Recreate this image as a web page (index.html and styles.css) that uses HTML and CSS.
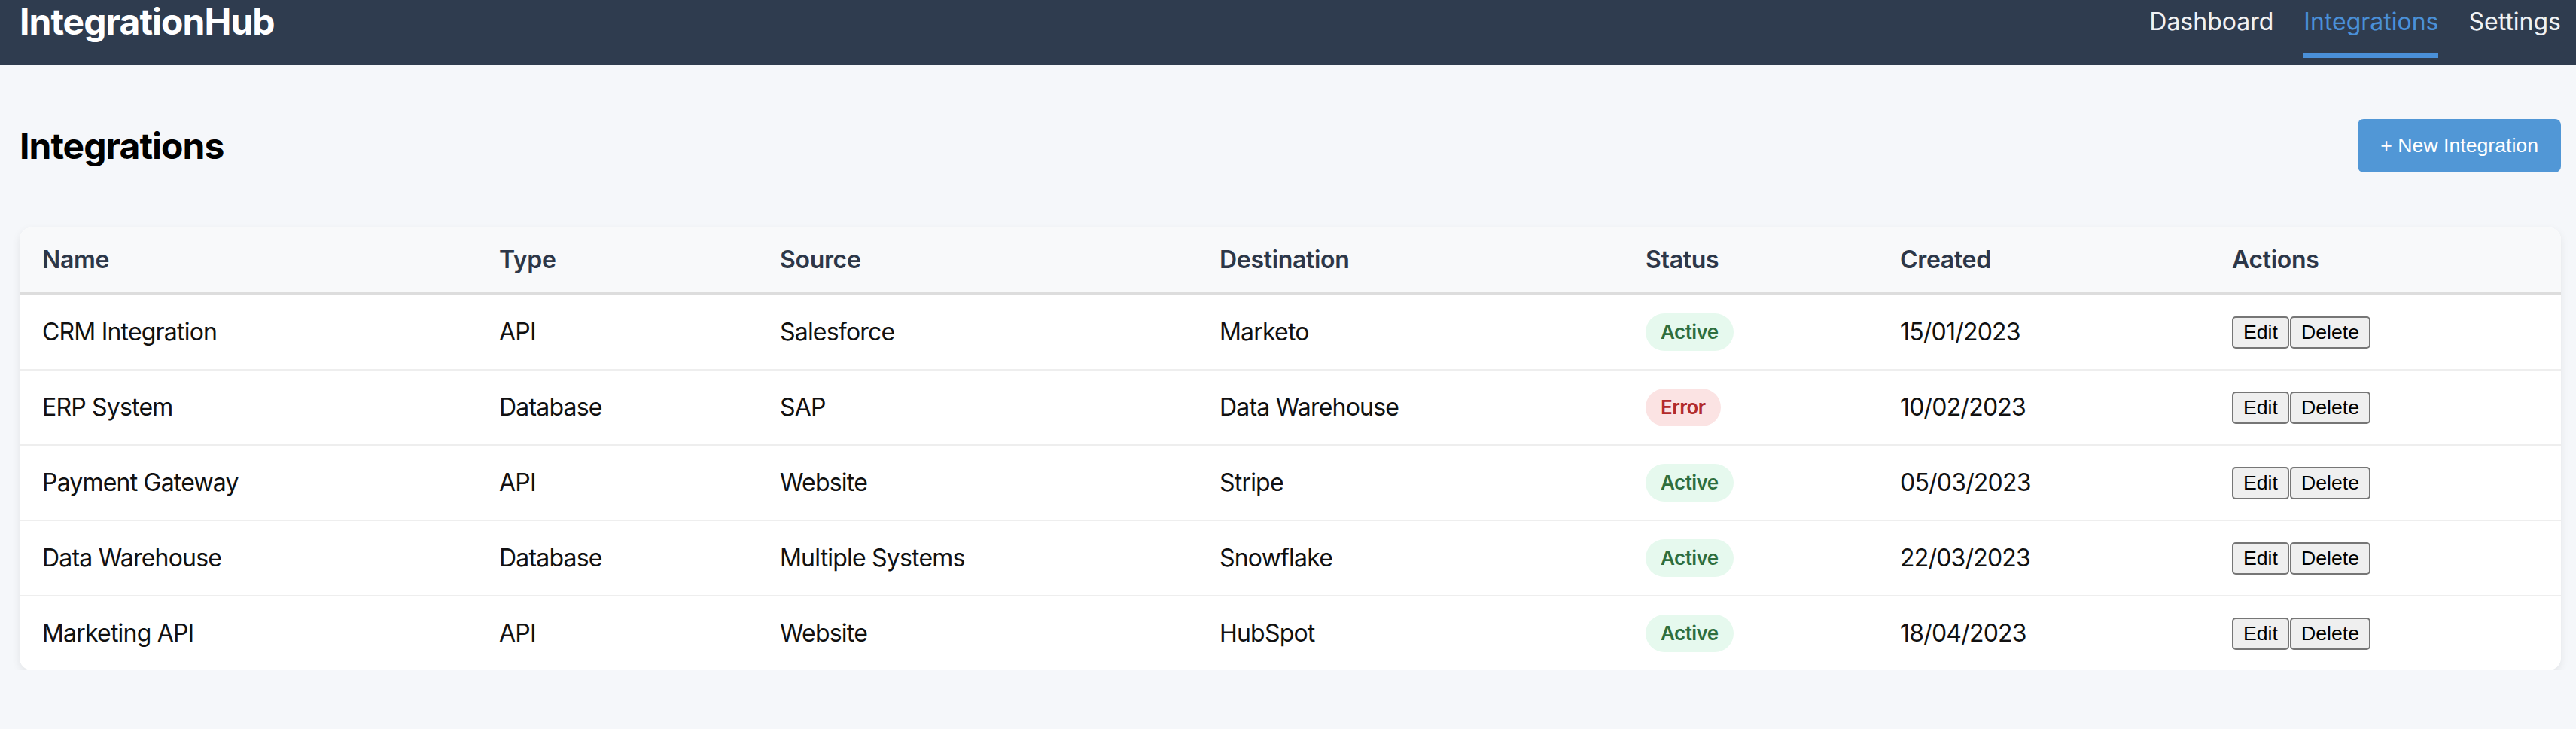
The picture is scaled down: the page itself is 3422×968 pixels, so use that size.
FILE: index.html
```html
<!DOCTYPE html>
<html lang="en">
<head>
<meta charset="utf-8">
<title>IntegrationHub</title>
<link rel="stylesheet" href="styles.css">
</head>
<body>
<nav class="navbar">
  <div class="brand">IntegrationHub</div>
  <ul class="nav-links">
    <li><a class="nav-link" href="#">Dashboard</a></li>
    <li><a class="nav-link active" href="#">Integrations</a></li>
    <li><a class="nav-link" href="#">Settings</a></li>
  </ul>
</nav>
<main class="content">
  <div class="page-header">
    <h1 class="page-title">Integrations</h1>
    <button class="btn-primary">+ New Integration</button>
  </div>
  <div class="card">
    <table class="data-table">
      <colgroup>
        <col class="col-name">
        <col class="col-type">
        <col class="col-source">
        <col class="col-dest">
        <col class="col-status">
        <col class="col-created">
        <col class="col-actions">
      </colgroup>
      <thead>
        <tr>
          <th>Name</th><th>Type</th><th>Source</th><th>Destination</th><th>Status</th><th>Created</th><th>Actions</th>
        </tr>
      </thead>
      <tbody>
        <tr>
          <td>CRM Integration</td><td>API</td><td>Salesforce</td><td>Marketo</td>
          <td><span class="badge badge-active">Active</span></td><td>15/01/2023</td>
          <td><span class="actions"><button class="btn-sm">Edit</button><button class="btn-sm">Delete</button></span></td>
        </tr>
        <tr>
          <td>ERP System</td><td>Database</td><td>SAP</td><td>Data Warehouse</td>
          <td><span class="badge badge-error">Error</span></td><td>10/02/2023</td>
          <td><span class="actions"><button class="btn-sm">Edit</button><button class="btn-sm">Delete</button></span></td>
        </tr>
        <tr>
          <td>Payment Gateway</td><td>API</td><td>Website</td><td>Stripe</td>
          <td><span class="badge badge-active">Active</span></td><td>05/03/2023</td>
          <td><span class="actions"><button class="btn-sm">Edit</button><button class="btn-sm">Delete</button></span></td>
        </tr>
        <tr>
          <td>Data Warehouse</td><td>Database</td><td>Multiple Systems</td><td>Snowflake</td>
          <td><span class="badge badge-active">Active</span></td><td>22/03/2023</td>
          <td><span class="actions"><button class="btn-sm">Edit</button><button class="btn-sm">Delete</button></span></td>
        </tr>
        <tr>
          <td>Marketing API</td><td>API</td><td>Website</td><td>HubSpot</td>
          <td><span class="badge badge-active">Active</span></td><td>18/04/2023</td>
          <td><span class="actions"><button class="btn-sm">Edit</button><button class="btn-sm">Delete</button></span></td>
        </tr>
      </tbody>
    </table>
  </div>
</main>
</body>
</html>
```
FILE: styles.css
```css
html, body {
  margin: 0;
  padding: 0;
}

body {
  background: #f5f7fa;
  font-family: Inter, "Noto Sans", sans-serif;
  letter-spacing: -0.02em;
  color: #111;
}

.navbar {
  display: flex;
  justify-content: space-between;
  align-items: flex-start;
  height: 86px;
  box-sizing: border-box;
  padding: 0 20px 0 26px;
  background: #2f3c4f;
}

.brand {
  font-size: 48px;
  font-weight: 700;
  line-height: 58px;
  letter-spacing: -0.02em;
  color: #ffffff;
}

.nav-links {
  display: flex;
  gap: 40px;
  list-style: none;
  margin: 0;
  padding: 0;
}

.nav-link {
  display: block;
  font-size: 32px;
  line-height: 39px;
  letter-spacing: 0;
  padding-top: 9px;
  padding-bottom: 23px;
  border-bottom: 6px solid transparent;
  color: #f0f2f5;
  text-decoration: none;
}

.nav-link.active {
  color: #4a90d9;
  border-bottom-color: #4a90d9;
}

.content {
  padding: 72px 20px 0 26px;
}

.page-header {
  display: flex;
  justify-content: space-between;
  align-items: center;
  margin-bottom: 73px;
}

.page-title {
  margin: 0;
  font-size: 48px;
  font-weight: 700;
  line-height: 58px;
  letter-spacing: -0.02em;
  color: #000;
}

.btn-primary {
  font-family: "Liberation Sans", Arial, sans-serif;
  font-size: 26.67px;
  line-height: normal;
  letter-spacing: normal;
  padding: 20px 30px;
  border: 0;
  border-radius: 8px;
  background: #5197d6;
  color: #fff;
}

.card {
  background: #fff;
  border-radius: 16px;
  box-shadow: 0 4px 12px rgba(0, 0, 0, 0.08);
  overflow: hidden;
}

.data-table {
  width: 100%;
  border-collapse: collapse;
  table-layout: fixed;
}

.col-name { width: 607px; }
.col-type { width: 373px; }
.col-source { width: 584px; }
.col-dest { width: 566px; }
.col-status { width: 338px; }
.col-created { width: 441px; }
.col-actions { width: 467px; }

.data-table th {
  text-align: left;
  padding: 24px 30px;
  font-size: 32px;
  font-weight: 600;
  line-height: 38px;
  color: #2d3748;
  background: #f8f9fa;
  border-bottom: 4px solid #dddddd;
}

.data-table td {
  padding: 24px 30px;
  font-size: 32px;
  line-height: 38px;
  letter-spacing: -0.025em;
  color: #111;
  border-bottom: 2px solid #eeeeee;
  vertical-align: middle;
}

.data-table tbody tr:last-child td {
  border-bottom: none;
}

.badge {
  display: inline-block;
  vertical-align: middle;
  padding: 8px 20px;
  border-radius: 25px;
  font-size: 26px;
  font-weight: 600;
  line-height: 34px;
  letter-spacing: -0.02em;
}

.badge-active {
  background: #e6f9ee;
  color: #2e6e3e;
}

.badge-error {
  background: #fbe3e3;
  color: #b22b2b;
}

.actions {
  display: inline-flex;
  gap: 1px;
  vertical-align: middle;
}

.btn-sm {
  font-family: "Liberation Sans", Arial, sans-serif;
  font-size: 26.67px;
  line-height: normal;
  letter-spacing: normal;
  padding: 4px 13px;
  border: 2px solid #767676;
  border-radius: 5px;
  background: #efefef;
  color: #000;
}
```
